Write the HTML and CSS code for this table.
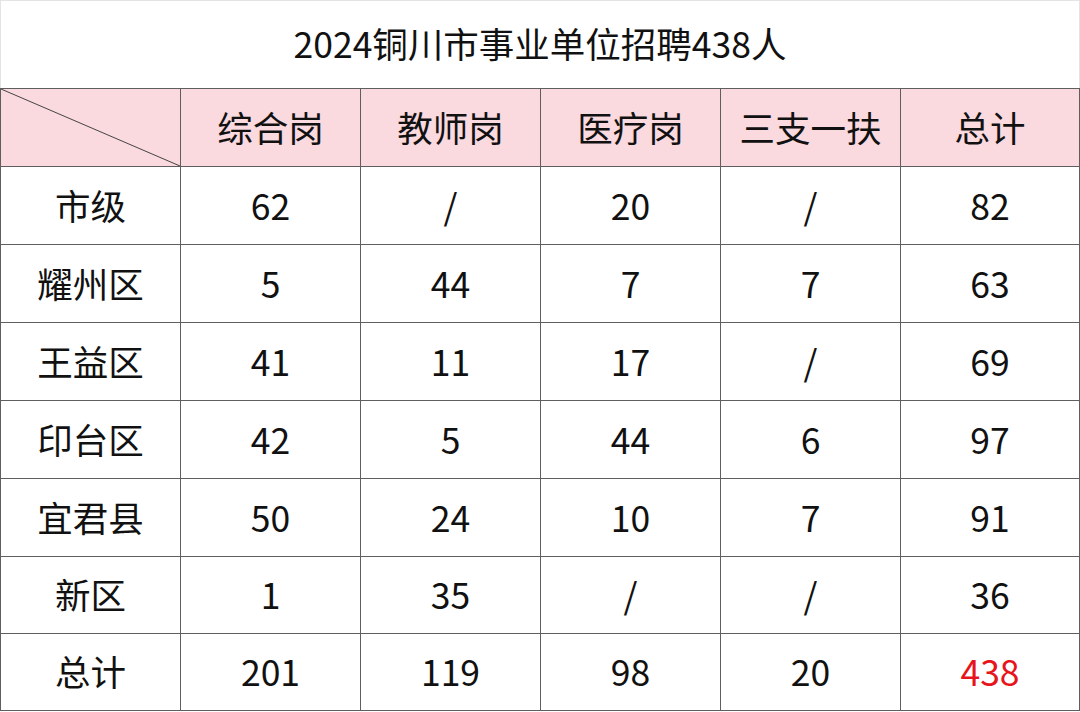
FILE: index.html
```html
<!DOCTYPE html>
<html lang="zh-CN">
<head>
<meta charset="utf-8">
<title>2024铜川市事业单位招聘438人</title>
<link rel="stylesheet" href="styles.css">
</head>
<body>
<div class="sheet">
  <div class="title">2024铜川市事业单位招聘438人</div>
  <div class="grid">
    <div class="cell head corner"><svg class="diag" viewBox="0 0 179 77" preserveAspectRatio="none"><line x1="0" y1="0" x2="179" y2="77" stroke="#444" stroke-width="1"/></svg></div>
    <div class="cell head">综合岗</div>
    <div class="cell head">教师岗</div>
    <div class="cell head">医疗岗</div>
    <div class="cell head">三支一扶</div>
    <div class="cell head">总计</div>

    <div class="cell">市级</div><div class="cell">62</div><div class="cell">/</div><div class="cell">20</div><div class="cell">/</div><div class="cell">82</div>
    <div class="cell">耀州区</div><div class="cell">5</div><div class="cell">44</div><div class="cell">7</div><div class="cell">7</div><div class="cell">63</div>
    <div class="cell">王益区</div><div class="cell">41</div><div class="cell">11</div><div class="cell">17</div><div class="cell">/</div><div class="cell">69</div>
    <div class="cell">印台区</div><div class="cell">42</div><div class="cell">5</div><div class="cell">44</div><div class="cell">6</div><div class="cell">97</div>
    <div class="cell">宜君县</div><div class="cell">50</div><div class="cell">24</div><div class="cell">10</div><div class="cell">7</div><div class="cell">91</div>
    <div class="cell">新区</div><div class="cell">1</div><div class="cell">35</div><div class="cell">/</div><div class="cell">/</div><div class="cell">36</div>
    <div class="cell">总计</div><div class="cell">201</div><div class="cell">119</div><div class="cell">98</div><div class="cell">20</div><div class="cell red">438</div>
  </div>
</div>
</body>
</html>
```
FILE: styles.css
```css
html, body {
  margin: 0;
  padding: 0;
  background: #ffffff;
}
.sheet {
  width: 1080px;
  height: 712px;
  overflow: hidden;
  font-family: "Noto Sans CJK SC", "Noto Sans", sans-serif;
  color: #111;
}
.title {
  box-sizing: border-box;
  height: 88px;
  border-top: 1px solid #e4e4e4;
  border-left: 1px solid #e4e4e4;
  border-right: 1px solid #e4e4e4;
  display: flex;
  align-items: center;
  justify-content: center;
  font-size: 35.5px;
  padding-bottom: 4px;
}
.grid {
  display: grid;
  grid-template-columns: 179px 179px 179px 179px 179px 1fr;
  grid-template-rows: 77px repeat(5, 77px) 76px 76px;
  gap: 1px;
  padding: 1px;
  background: #5e5e5e;
}
.cell {
  background: #ffffff;
  display: flex;
  align-items: center;
  justify-content: center;
  font-size: 35.5px;
  line-height: 1;
  padding-bottom: 2px;
}
.head {
  background: #fad9df;
}
.corner {
  position: relative;
  padding-bottom: 0;
}
.diag {
  position: absolute;
  left: 0;
  top: 0;
  width: 100%;
  height: 100%;
}
.red {
  color: #e8141b;
}
```
